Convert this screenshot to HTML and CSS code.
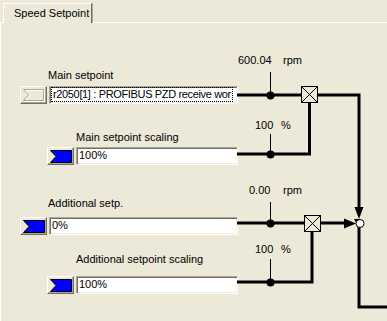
FILE: index.html
```html
<!DOCTYPE html>
<html>
<head>
    <meta charset="UTF-8">
    <title>Speed Setpoint</title>
    <link rel="stylesheet" href="styles.css">
</head>
<body>
    <div class="window">
        <div class="tabs">
            <div class="tab">Speed Setpoint</div>
        </div>

        <div class="pane">
            <!-- 입력 행 -->
            <div class="row rowMain">
                <div class="rowLabel">Main setpoint</div>
                <div class="rowCtrl">
                    <span class="connBtn">
                        <svg width="22" height="13" viewBox="0 0 22 13">
                            <polygon points="1.5,1.5 21.5,1.5 21.5,12.5 1.5,12.5 6.5,7" fill="none" stroke="#fff"/>
                            <polygon points="0.5,0.5 20.5,0.5 20.5,11.5 0.5,11.5 5.5,6" fill="none" stroke="#aca899"/>
                        </svg>
                    </span>
                    <span class="field"><span class="focusText">r2050[1] : PROFIBUS PZD receive wor</span></span>
                </div>
            </div>

            <div class="row rowScale rowScale1">
                <div class="rowLabel">Main setpoint scaling</div>
                <div class="rowCtrl">
                    <span class="connBtn">
                        <svg width="22" height="13" viewBox="0 0 22 13">
                            <polygon points="0.5,0.5 21.5,0.5 21.5,12.5 0.5,12.5 6,6.5" fill="#0000ff" stroke="#000"/>
                        </svg>
                    </span>
                    <span class="field">100%</span>
                </div>
            </div>

            <div class="row rowMain rowAdd">
                <div class="rowLabel">Additional setp.</div>
                <div class="rowCtrl">
                    <span class="connBtn">
                        <svg width="22" height="13" viewBox="0 0 22 13">
                            <polygon points="0.5,0.5 21.5,0.5 21.5,12.5 0.5,12.5 6,6.5" fill="#0000ff" stroke="#000"/>
                        </svg>
                    </span>
                    <span class="field">0%</span>
                </div>
            </div>

            <div class="row rowScale rowScale2">
                <div class="rowLabel">Additional setpoint scaling</div>
                <div class="rowCtrl">
                    <span class="connBtn">
                        <svg width="22" height="13" viewBox="0 0 22 13">
                            <polygon points="0.5,0.5 21.5,0.5 21.5,12.5 0.5,12.5 6,6.5" fill="#0000ff" stroke="#000"/>
                        </svg>
                    </span>
                    <span class="field">100%</span>
                </div>
            </div>

            <!-- 결선도 (pane 기준 좌표) -->
            <svg class="wiring" width="387" height="299" viewBox="0 22 387 299">
                <g stroke="#000" stroke-width="3" fill="none">
                    <path d="M237 95 H301"/>
                    <path d="M318 95 H359 V208"/>
                    <path d="M309.5 103 V154 H237"/>
                    <path d="M237 223 H350"/>
                    <path d="M312 231 V282 H237"/>
                    <path d="M359 227 V307 H387"/>
                </g>
                <g stroke="#000" stroke-width="1">
                    <path d="M270.5 72 V95"/>
                    <path d="M270.5 134 V154"/>
                    <path d="M270.5 202 V223"/>
                    <path d="M270.5 259 V282"/>
                </g>
                <g fill="#000">
                    <circle cx="270.5" cy="95.5" r="4"/>
                    <circle cx="270.5" cy="154.5" r="4"/>
                    <circle cx="270.5" cy="223.5" r="4"/>
                    <circle cx="270.5" cy="282.5" r="4"/>
                    <polygon points="354,219 359.5,219 356.5,223.5"/>
                    <polygon points="354.5,207 363.5,207 359,219"/>
                    <polygon points="344,218.5 344,228.5 356,223.5"/>
                </g>
                <g stroke="#000" stroke-width="1" fill="#ece9d8">
                    <rect x="301.5" y="86.5" width="16" height="16"/>
                    <path d="M302 87 L317 102 M317 87 L302 102"/>
                    <rect x="304.5" y="215.5" width="16" height="16"/>
                    <path d="M305 216 L320 231 M320 216 L305 231"/>
                    <circle cx="360" cy="223.5" r="4" fill="#fff"/>
                </g>
                <g class="val">
                    <text x="238" y="64">600.04</text><text x="283" y="64">rpm</text>
                    <text x="255" y="129">100</text><text x="281" y="129">%</text>
                    <text x="249" y="194">0.00</text><text x="283" y="194">rpm</text>
                    <text x="255" y="253">100</text><text x="281" y="253">%</text>
                </g>
            </svg>
        </div>
    </div>
</body>
</html>
```

FILE: styles.css
```css
/* 전체 설정 */
* {
    margin: 0;
    padding: 0;
    box-sizing: border-box;
}

body {
    background: #ece9d8;
    font-family: "Liberation Sans", Arial, sans-serif;
    font-size: 11px;
    color: #000;
}

.window {
    width: 387px;
    height: 321px;
    overflow: hidden;
}

/* 탭 머리 */
.tabs {
    display: flex;
    height: 22px;
    padding-left: 3px;
    padding-top: 3px;
}

.tab {
    width: 89px;
    height: 20px;
    line-height: 18px;
    padding-left: 10px;
    background: #ece9d8;
    border-top: 1px solid #fff;
    border-left: 1px solid #fff;
    border-right: 1px solid #716f64;
    box-shadow: 1px 0 0 #aca899;
    position: relative;
    z-index: 1;
}

/* 탭 본문 */
.pane {
    position: relative;
    height: 299px;
    border-top: 1px solid #fff;
    border-left: 1px solid #fff;
}

.row {
    display: flex;
    flex-direction: column;
}

.rowLabel {
    line-height: 13px;
    white-space: nowrap;
}

.rowCtrl {
    display: flex;
    gap: 2px;
    height: 18px;
}

.rowMain .rowLabel { padding-left: 47px; }
.rowMain .rowCtrl { padding-left: 19px; }
.rowScale .rowLabel { padding-left: 75px; }
.rowScale .rowCtrl { padding-left: 46px; }

.rowMain { margin-top: 46px; }
.rowMain .rowLabel { margin-bottom: 4px; }
.rowScale1 { margin-top: 27px; }
.rowScale1 .rowLabel { margin-bottom: 3px; }
.rowAdd { margin-top: 32px; }
.rowAdd .rowLabel { margin-bottom: 7px; }
.rowScale2 { margin-top: 18px; }
.rowScale2 .rowLabel { margin-bottom: 10px; }

.connBtn {
    width: 27px;
    height: 18px;
    display: flex;
    align-items: center;
    justify-content: center;
    background: #ece9d8;
    border-top: 1px solid #fff;
    border-left: 1px solid #fff;
    border-right: 1px solid #716f64;
    border-bottom: 1px solid #716f64;
    box-shadow: inset -1px -1px 0 #aca899;
}

.connBtn svg {
    display: block;
}

.field {
    flex: 0 0 auto;
    width: 189px;
    height: 18px;
    line-height: 14px;
    padding-left: 2px;
    background: #fff;
    border-top: 1px solid #aca899;
    border-left: 1px solid #aca899;
    border-right: 1px solid #fff;
    border-bottom: 1px solid #fff;
    box-shadow: inset 1px 1px 0 #716f64, inset -1px -1px 0 #f1efe2;
    overflow: hidden;
    white-space: nowrap;
}

.rowScale .field {
    width: 162px;
}

.focusText {
    display: inline-block;
    outline: 1px dotted #000;
    outline-offset: 0;
    padding: 0 1px;
    margin-top: 1px;
    line-height: 13px;
    letter-spacing: -0.35px;
}

.wiring {
    position: absolute;
    left: -1px;
    top: -1px;
}

.val text {
    font-family: "Liberation Sans", Arial, sans-serif;
    font-size: 11px;
    fill: #000;
}
```
